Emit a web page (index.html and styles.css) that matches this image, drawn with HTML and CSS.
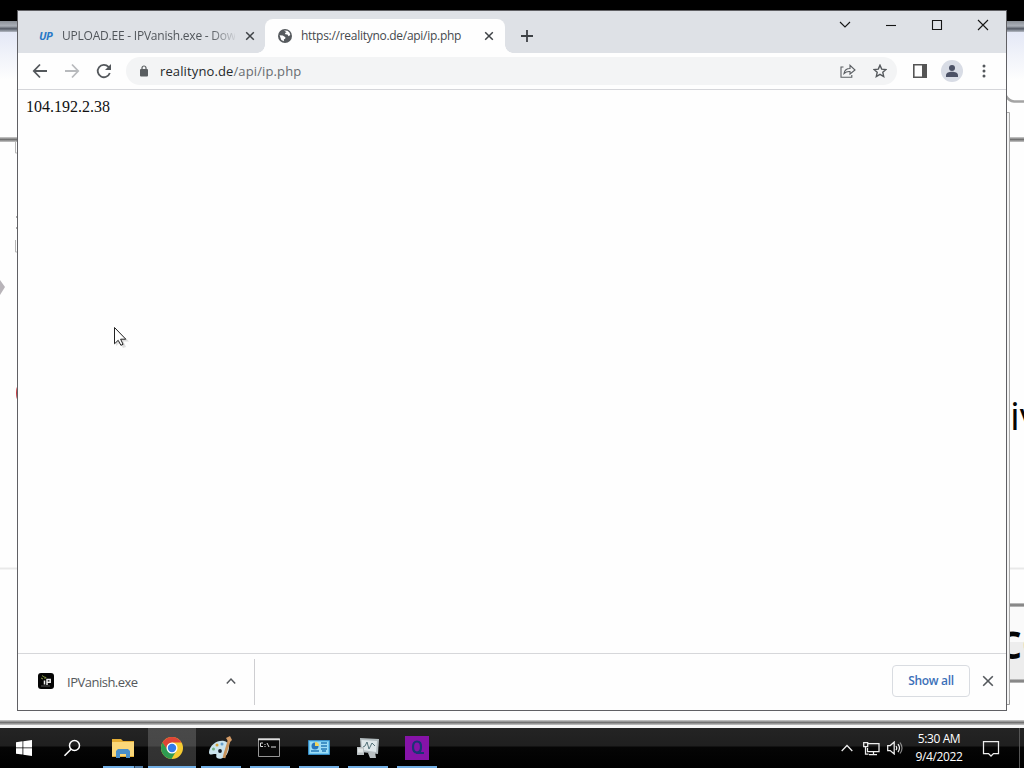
FILE: index.html
```html
<!DOCTYPE html>
<html lang="en">
<head>
<meta charset="utf-8">
<title>Desktop</title>
<link rel="stylesheet" href="styles.css">
</head>
<body>
<div class="desktop">
  <svg class="backdrop" width="1024" height="728" viewBox="0 0 1024 728">
    <defs>
      <linearGradient id="sky" x1="0" y1="0" x2="0" y2="1"><stop offset="0" stop-color="#e4e8f6"/><stop offset="1" stop-color="#fefefe"/></linearGradient>
      <linearGradient id="bar" x1="0" y1="0" x2="0" y2="1"><stop offset="0" stop-color="#8b9097"/><stop offset=".45" stop-color="#abb0b8"/><stop offset=".7" stop-color="#555b66"/><stop offset="1" stop-color="#b4b9c3"/></linearGradient>
      <linearGradient id="line" x1="0" y1="0" x2="0" y2="1"><stop offset="0" stop-color="#d0d0d0"/><stop offset=".5" stop-color="#727272"/><stop offset="1" stop-color="#c8c8c8"/></linearGradient>
    </defs>
    <rect width="1024" height="728" fill="#fefefe"/>
    <rect width="1024" height="22" fill="#000"/>
    <rect y="21" width="1024" height="11" fill="url(#bar)"/>
    <rect y="32" width="1024" height="48" fill="url(#sky)"/>
    <rect y="137" width="1024" height="5" fill="url(#line)"/>
    <path d="M1006 96q3 5 8 5.500h10" fill="none" stroke="#a4a4a4" stroke-width="2.500"/>
    <path d="M15.500 142v11h2M15.500 240v12h2" fill="none" stroke="#b5b5b5"/>
    <path d="M16 217h1M16 228h1" stroke="#aaa" stroke-width="2"/>
    <path d="M0 280l5 7-5 8z" fill="#b8b4b9"/>
    <ellipse cx="18" cy="393" rx="2" ry="7" fill="#c33b42"/>
    <path d="M0 568.500h17M1010 568.500h14" stroke="#e9e9e9" stroke-width="2"/>
    <rect x="1007" y="607" width="17" height="75" fill="#ededed"/>
    <rect x="1007" y="607" width="17" height="35" fill="#fafafa"/>
    <rect x="1007" y="603" width="17" height="4" fill="url(#line)"/>
    <rect x="1007" y="679" width="17" height="4" fill="url(#line)"/>
    <text class="clipped-word medium" x="1010" y="430" font-size="39">iv</text>
    <text class="clipped-word heavy" x="998" y="659" font-size="48">co</text>
    <path d="M1008 112v592" stroke="#f4f4f4" stroke-width="2"/>
    <path d="M1009.500 704V112.500h-3" fill="none" stroke="#aaa"/>
    <path d="M1009.500 700v4.500h-4" fill="none" stroke="#999"/>
    <rect y="720" width="1024" height="5" fill="url(#line)"/>
    <rect y="725" width="1024" height="3" fill="#f6f6f6"/>
  </svg>

  <main class="window">
    <header class="tabstrip">
      <div class="tab tab-idle">
        <span class="up-logo">UP</span>
        <span class="tab-title faded">UPLOAD.EE - IPVanish.exe - Download</span>
        <svg class="tab-close" width="10" height="10" viewBox="0 0 10 10"><path d="M1.200 1.200l7.600 7.600M8.800 1.200L1.200 8.800"/></svg>
      </div>
      <div class="tab tab-active">
        <svg class="globe" width="14" height="14" viewBox="0 0 14 14"><circle cx="7" cy="7" r="7" fill="#565a5e"/><path d="M6 1.600 9.500 1.700 11.500 3.600 12.300 6 10.500 7.300 9.500 5.600 7.300 5.300 7 4 8.500 3.200z" fill="#fff"/><path d="M1.600 6.300 4.800 6.600 7.400 8.200 7.200 9.700 5.900 10.200 5.900 12.300 3.300 10.900z" fill="#fff"/></svg>
        <span class="tab-title url-title">https://realityno.de/api/ip.php</span>
        <svg class="tab-close" width="10" height="10" viewBox="0 0 10 10"><path d="M1.200 1.200l7.600 7.600M8.800 1.200L1.200 8.800"/></svg>
      </div>
      <svg class="new-tab" width="12" height="12" viewBox="0 0 12 12"><path d="M6 0v12M0 6h12"/></svg>
      <div class="controls">
        <svg viewBox="0 0 12 12"><path d="M1 4l5 5 5-5"/></svg>
        <svg viewBox="0 0 12 12"><path d="M1 7.500h10"/></svg>
        <svg viewBox="0 0 12 12"><path d="M1.500 2.500h9v9h-9z"/></svg>
        <svg viewBox="0 0 12 12"><path d="M1 2l10 10M11 2L1 12"/></svg>
      </div>
    </header>

    <div class="toolbar">
      <div class="nav">
        <svg width="16" height="16" viewBox="0 0 16 16"><path d="M15 8H2M8 1.500 1.800 8 8 14.500"/></svg>
        <svg class="dim" width="16" height="16" viewBox="0 0 16 16"><path d="M1 8h13M8 1.500 14.200 8 8 14.500"/></svg>
        <svg width="16" height="16" viewBox="0 0 16 16"><path d="M13.800 10A6.200 6.200 0 1 1 12.500 3.800L14 5.500"/><path d="M15 1v6H9z" fill="#54585c" stroke="none"/></svg>
      </div>
      <div class="omnibox">
        <svg width="8" height="12" viewBox="0 0 8 12"><rect y="4" width="8" height="7.500" rx="1" fill="#595d60"/><path d="M2 4.500V3a2 2 0 0 1 4 0v1.500" fill="none" stroke="#595d60" stroke-width="1.200"/></svg>
        <span class="address">realityno.de<span class="path">/api/ip.php</span></span>
        <svg class="share" width="16" height="14" viewBox="0 0 16 14"><path d="M3.500 3H1v10.300h10.800V11"/><path d="M4 9.500C4.500 6.500 6.500 4.500 10 4.500V1.300L15 6l-5 4V7.500C7.500 7.300 5.500 8 4 9.500z"/></svg>
        <svg class="star" width="14" height="14" viewBox="0 0 14 14"><path d="M7 1.200l1.700 3.900 4.300.4-3.200 2.800.9 4.200L7 10.300l-3.700 2.200.9-4.200L1 5.500l4.300-.4z"/></svg>
      </div>
      <svg class="panel" width="14" height="14" viewBox="0 0 14 14"><path d="M.8.800h12.400v12.400H.8z" fill="none" stroke="#555" stroke-width="1.600"/><path d="M9 0h5v14H9z" fill="#555"/></svg>
      <svg class="avatar" width="22" height="22" viewBox="0 0 22 22"><circle cx="11" cy="11" r="11" fill="#d8dce5"/><circle cx="11" cy="8" r="3" fill="#4b5165"/><path d="M5 17v-1.500c0-2.800 3-3.700 6-3.700s6 .9 6 3.700V17z" fill="#4b5165"/></svg>
      <svg class="dots" width="4" height="14" viewBox="0 0 4 14"><circle cx="2" cy="2" r="1.500"/><circle cx="2" cy="7" r="1.500"/><circle cx="2" cy="12" r="1.500"/></svg>
    </div>

    <section class="page">104.192.2.38</section>

    <footer class="shelf">
      <div class="download">
        <svg width="16" height="16" viewBox="0 0 16 16"><rect width="16" height="16" rx="3" fill="#050505"/><path d="M4 2.500 6 4l2 .5L6.500 6M3 5l2 1" fill="none" stroke="#8a9c45"/><path d="M6.500 7.500v4M9 12V6.500h3.200v2.700H9" fill="none" stroke="#eee" stroke-width="1.500"/><path d="M3 13h9" stroke="#777" stroke-width=".7"/></svg>
        <span class="filename">IPVanish.exe</span>
        <svg class="chevron" width="10" height="8" viewBox="0 0 10 8"><path d="M.8 6.500 5 2l4.200 4.500"/></svg>
      </div>
      <button class="show-all">Show all</button>
      <svg class="shelf-close" width="12" height="12" viewBox="0 0 12 12"><path d="M1.200 1.200l9.600 9.600M10.800 1.200l-9.600 9.600"/></svg>
    </footer>
  </main>

  <svg class="cursor" width="18" height="24" viewBox="0 0 18 24"><path d="M3 3v17l4-3.500 3 5.500 3-1-2.500-5.500H16z" fill="#bbb" opacity=".45"/><path d="M1.500 1.500v16.300l3.700-3.500 2.700 5 2.200-1-2.500-5.100h5.200z" fill="#fff" stroke="#222"/></svg>

  <nav class="taskbar">
    <div class="launch"><svg width="16" height="16" viewBox="0 0 16 16" fill="#fff"><path d="M0 2.300 6.500 1.300v6.200H0zM7.300 1.200 16 0v7.500H7.300zM0 8.300h6.500v6.300L0 13.700zM7.300 8.300H16V16l-8.700-1.300z"/></svg></div>
    <div class="launch"><svg width="18" height="18" viewBox="0 0 18 18" fill="none" stroke="#fff" stroke-width="1.500"><circle cx="11.500" cy="6.500" r="5"/><path d="M8 10.200 1.500 16.800"/></svg></div>
    <div class="apps">
      <div class="app stacked"><svg viewBox="0 0 24 24"><path d="M1 3h9l2 2h11v16H1z" fill="#e5ae36"/><path d="M1 6h22v14H1z" fill="#fad779"/><path d="M5 22v-7l2-2h10l2 2v7h-4v-4H9v4z" fill="#4a8fc8"/></svg></div>
      <div class="app current"><svg viewBox="0 0 24 24"><circle cx="12" cy="12" r="11" fill="#f6cb32"/><path d="M2.500 6.500A11 11 0 0 1 21.500 6.500H12L7 14z" fill="#df4537"/><path d="M2.500 6.500A11 11 0 0 0 11.500 23l5-8.500H8z" fill="#2e9b51"/><circle cx="12" cy="12" r="5.500" fill="#fff"/><circle cx="12" cy="12" r="4.200" fill="#347bea"/></svg></div>
      <div class="app"><svg viewBox="0 0 24 24"><path d="M0 16C1 9 8 4 15 5c5 1 6 6 4 11-2 6-8 8-11 6-2-2 1-4-2-4-3 0-6 2-6-2z" fill="#cbe3ed"/><circle cx="4.500" cy="13" r="1.500" fill="#76b483"/><circle cx="8" cy="9" r="1.500" fill="#d6a33b"/><circle cx="13" cy="8" r="1.500" fill="#6a9fca"/><circle cx="11" cy="15" r="1.900" fill="#151d28"/><path d="M20 5l-4 13-1 4" fill="none" stroke="#c9945c" stroke-width="2.800"/><path d="M17 2l4-2 2 4-3 3z" fill="#d49b66"/></svg></div>
      <div class="app console"><svg viewBox="0 0 24 24"><path d="M1.500 2.500h21v18h-21z" fill="#080808" stroke="#969696"/><path d="M1 3.500h22" stroke="#ddd" stroke-width="1.500"/><path d="M6 7H3.500v3.500H6M8 8v1M8 10v1M10 7l2 4M14 11h5" fill="none" stroke="#ddd"/></svg></div>
      <div class="app"><svg viewBox="0 0 24 24"><path d="M1.500 4.500h21v14h-21z" fill="#6fc6ee" stroke="#378bc4"/><path d="M3 6h18v11H3z" fill="#9ddcf6"/><circle cx="8" cy="10" r="3.500" fill="#2976ba"/><path d="M8 10V6a4 4 0 0 1 4 4z" fill="#f2d55b"/><path d="M14 7h6M14 10h6M14 13h6M4 15h8M15 15h4" stroke="#2479b7" stroke-width="1.500"/></svg></div>
      <div class="app"><svg viewBox="0 0 24 24"><path d="M4 2l19 1-1 15-17-2z" fill="#b4bdc0"/><path d="M5.500 4l15.500 1-1 11-14-2z" fill="#dfe7e9"/><path d="M7 11l2-1 2-4 2 7 3-6 3 3" fill="none" stroke="#547279"/><path d="M1 11h7v8H1zM12 17l7-1 1 6h-6z" fill="#b9c0c2"/><path d="M2 12.500h5v4H2z" fill="#e0e5e5"/></svg></div>
      <div class="app"><svg viewBox="0 0 24 24"><path d="M0 0h24v24H0z" fill="#8613a8"/><path d="M12 5.500c-3 0-4 2-4 5.500s1 5.500 4 5.500 4-2 4-5.500-1-5.500-4-5.500zM11 17h8" fill="none" stroke="#193575" stroke-width="2.200"/></svg></div>
    </div>
    <div class="tray">
      <svg width="12" height="8" viewBox="0 0 12 8"><path d="M.7 7 6 1.500 11.300 7"/></svg>
      <svg width="17" height="15" viewBox="0 0 17 15"><path d="M5 2.500h11v8H4.500V7M10.500 10.500V14M6 13.500h8M.7 1.500h4v4h-4zM2.500 5.500V13h3"/></svg>
      <svg width="16" height="14" viewBox="0 0 16 14"><path d="M.7 4.500h2.500l4-3.500v12l-4-3.500H.7zM9 5q1.500 2 0 4M11 3q3 4 0 8"/><path d="M13 1.500q4 5.500 0 11" opacity=".55"/></svg>
    </div>
    <div class="clock"><span>5:30 AM</span><span class="date">9/4/2022</span></div>
    <svg class="notice" width="18" height="18" viewBox="0 0 18 18"><path d="M1.500 1.500h15v12h-5L9 16l-2.500-2.500h-5z"/></svg>
    <span class="peek"></span>
  </nav>
</div>
</body>
</html>
```

FILE: styles.css
```css
* { box-sizing: border-box; }
body { margin: 0; overflow: hidden; font-family: "Open Sans", "Noto Sans", sans-serif; }
svg { flex: none; display: block; }
.desktop { position: relative; width: 1024px; height: 768px; display: flex; flex-direction: column; background: #fff; }
.backdrop { width: 1024px; height: 728px; }
.clipped-word { font-family: "Open Sans", sans-serif; fill: #050505; }
.medium { font-weight: 500; }
.heavy { font-weight: 600; }

.window { position: absolute; left: 17px; top: 10px; width: 990px; height: 701px; border: 1px solid #606064; background: #fefefe; display: flex; flex-direction: column; }
.tabstrip { height: 42px; background: #dee1e6; display: flex; align-items: flex-end; flex: none; }
.tab { height: 34px; display: flex; align-items: center; font-size: 12px; color: #45494d; }
.tab-idle { width: 247px; padding-left: 21px; }
.up-logo { width: 23px; padding-bottom: 1px; font: italic bold 11px "Open Sans", sans-serif; letter-spacing: -.7px; color: #2878c7; }
.tab-title { white-space: nowrap; line-height: 18px; }
.faded { width: 173px; overflow: hidden; letter-spacing: -.22px; color: #51565b; -webkit-mask-image: linear-gradient(90deg, #000 148px, transparent 176px); mask-image: linear-gradient(90deg, #000 148px, transparent 176px); }
.tab-close { margin-left: auto; stroke: #3e4246; stroke-width: 1.5; fill: none; }
.tab-idle .tab-close { margin-left: 10px; }
.tab-active { position: relative; width: 240px; padding: 0 11px 0 13px; background: #fefefe; border-radius: 8px 8px 0 0; }
.tab-active::before, .tab-active::after { content: ""; position: absolute; bottom: 0; width: 8px; height: 8px; }
.tab-active::before { left: -8px; background: radial-gradient(circle at 0 0, transparent 7.5px, #fefefe 8px); }
.tab-active::after { right: -8px; background: radial-gradient(circle at 100% 0, transparent 7.5px, #fefefe 8px); }
.url-title { margin-left: 9px; letter-spacing: -.28px; }
.new-tab { margin: 0 0 11px 16px; stroke: #3d4145; stroke-width: 1.8; }
.controls { align-self: flex-start; margin: 7px 17px 0 auto; display: flex; gap: 34px; }
.controls svg { width: 12px; height: 12px; fill: none; stroke: #151515; stroke-width: 1.1; overflow: visible; }

.toolbar { height: 37px; flex: none; display: flex; align-items: center; border-bottom: 1px solid #d5d6da; padding: 0 20px 0 14px; }
.nav { display: flex; gap: 16px; }
.nav svg { fill: none; stroke: #54585c; stroke-width: 1.8; }
.nav .dim { stroke: #b8babd; }
.omnibox { width: 771px; height: 28px; margin-left: 14px; padding: 0 10px 0 14px; border-radius: 14px; background: #f3f4f5; display: flex; align-items: center; }
.address { margin-left: 12px; font-size: 13px; letter-spacing: .12px; color: #25282b; line-height: 20px; white-space: nowrap; }
.path { color: #686c70; }
.share { margin-left: auto; fill: none; stroke: #5b5f63; stroke-width: 1.1; }
.star { margin-left: 17px; fill: none; stroke: #54585c; stroke-width: 1.4; }
.panel { margin-left: 16px; }
.avatar { margin-left: 14px; }
.dots { margin-left: auto; fill: #54585c; }
.page { flex: 1; padding: 8px; font: 16px/18px "Liberation Serif", serif; color: #111; }

.shelf { height: 57px; flex: none; border-top: 1px solid #d6d7da; display: flex; align-items: center; padding-right: 12px; }
.download { width: 237px; height: 46px; padding: 0 18px 2px 20px; border-right: 1px solid #ceced1; display: flex; align-items: center; }
.filename { margin-left: 13px; padding-top: 2px; font-size: 13px; letter-spacing: -.5px; color: #55585c; }
.chevron { margin-left: auto; fill: none; stroke: #54585c; stroke-width: 1.5; }
.show-all { width: 78px; height: 32px; margin: 0 12px 3px auto; padding: 0 0 1px; border: 1px solid #d9dce1; border-radius: 4px; background: #fefefe; color: #3c70b8; font: 600 12px "Open Sans", sans-serif; letter-spacing: -.3px; }
.shelf-close { margin-bottom: 2px; stroke: #54585c; stroke-width: 1.6; }
.cursor { position: absolute; left: 113px; top: 326px; }

.taskbar { height: 40px; display: flex; background: linear-gradient(#242424 0, #1f1f1f 18px, #050505 19px, #000 100%); }
.launch { width: 48px; display: flex; align-items: center; justify-content: center; }
.apps { margin-left: 3px; display: flex; gap: 1px; }
.app { width: 48px; display: flex; flex-direction: column; align-items: center; justify-content: space-between; padding-top: 8px; }
.app svg { width: 24px; height: 24px; }
.app::after { content: ""; width: 40px; height: 2px; background: #72afe5; }
.stacked::after { background: linear-gradient(90deg, #72afe5 31px, #263f58 31px, #263f58 32px, #557fa8 32px); }
.console svg { margin-right: 2px; }
.current { background: linear-gradient(#494949 0, #474747 18px, #333 19px, #303030 100%); }
.current::after { width: 48px; }
.tray { margin-left: auto; display: flex; align-items: center; gap: 7px; }
.tray svg, .notice { fill: none; stroke: #eee; stroke-width: 1.25; }
.tray svg:first-child { margin-right: 3px; }
.clock { width: 74px; margin-left: -1px; padding-top: 2px; display: flex; flex-direction: column; align-items: center; color: #fff; font-size: 12px; line-height: 18px; letter-spacing: -.4px; }
.notice { align-self: center; margin: 2px 19px 0 6px; }
.peek { width: 5px; border-left: 1px solid #555; }
```
